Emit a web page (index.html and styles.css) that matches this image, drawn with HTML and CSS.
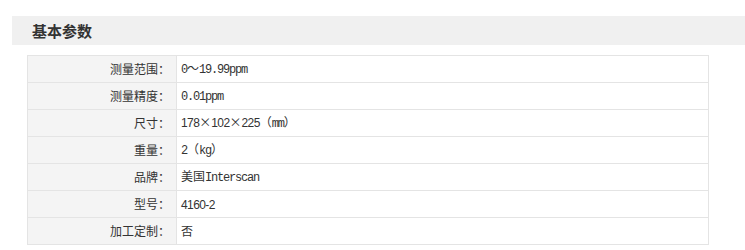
FILE: index.html
```html
<!DOCTYPE html>
<html lang="zh-CN">
<head>
<meta charset="utf-8">
<title>基本参数</title>
<link rel="stylesheet" href="styles.css">
</head>
<body>
<div class="section-title">基本参数</div>
<table class="params">
  <tr><th>测量范围：</th><td><span class="lat">0</span>～<span class="lat">19.99ppm</span></td></tr>
  <tr><th>测量精度：</th><td><span class="lat">0.01ppm</span></td></tr>
  <tr><th>尺寸：</th><td><span class="num">178</span>×<span class="num">102</span>×<span class="num">225</span>（<span class="lat">mm</span>）</td></tr>
  <tr><th>重量：</th><td><span class="lat">2</span>（<span class="lat">kg</span>）</td></tr>
  <tr><th>品牌：</th><td>美国<span class="lat">Interscan</span></td></tr>
  <tr><th>型号：</th><td><span class="num">4160-2</span></td></tr>
  <tr><th>加工定制：</th><td>否</td></tr>
</table>
</body>
</html>
```
FILE: styles.css
```css
html, body {
  margin: 0;
  padding: 0;
  background: #fff;
}
body {
  font-family: "Noto Sans CJK SC", "DejaVu Sans", sans-serif;
  color: #333;
  font-size: 12px;
}
.section-title {
  margin: 16px 0 0 12px;
  height: 29px;
  line-height: 29px;
  padding-left: 20px;
  background: #f0f0f0;
  font-size: 15px;
  font-weight: bold;
  color: #333;
}
.params {
  margin: 10px 0 0 27px;
  width: 682px;
  border-collapse: collapse;
  table-layout: fixed;
}
.params th,
.params td {
  border: 1px solid #e4e4e4;
  height: 26px;
  padding: 0;
  font-size: 12px;
  font-weight: normal;
  line-height: 14px;
  vertical-align: middle;
  white-space: nowrap;
}
.params th {
  width: 142px;
  padding-right: 6px;
  text-align: right;
  background: #f4f4f4;
  color: #333;
}
.params td {
  padding-left: 4px;
  text-align: left;
  background: #fff;
}
.lat {
  font-family: "Liberation Mono", monospace;
  letter-spacing: -1.2px;
}
.num {
  font-family: "Liberation Sans", sans-serif;
  letter-spacing: -0.6px;
}
```
